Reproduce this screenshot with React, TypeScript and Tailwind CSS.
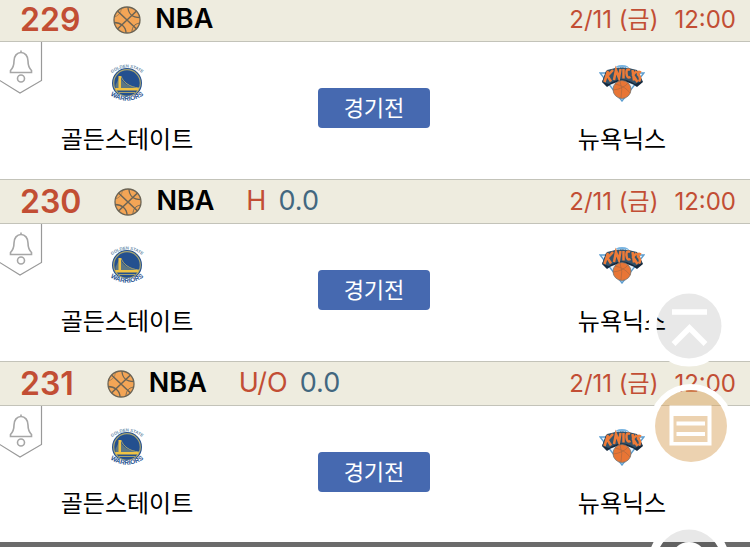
import clsx from 'clsx';

type Match = {
    no: number;
    label?: string;
    value?: string;
};

const matches: Match[] = [{ no: 229 }, { no: 230, label: 'H', value: '0.0' }, { no: 231, label: 'U/O', value: '0.0' }];

const Basketball = () => (
    <svg viewBox="0 0 28 28" className="h-7 w-7 shrink-0" fill="none" stroke="#6b6455" strokeWidth="1.3">
        <circle cx="14" cy="14" r="13" fill="#f3a556" />
        <path d="M4.500 5 23.500 23M23.500 5 4.500 23" strokeWidth="1.5" />
        <path d="M15 1C15 7 19 11.500 27 11.500" />
        <path d="M1 16.500C8 16.500 13 21 13 27" />
        <path d="M1.500 11C5 10 8 7 8.500 2.500" strokeWidth="0.5" />
        <path d="M19 26C19 21 21.500 18 26.500 17" strokeWidth="0.9" />
    </svg>
);

const WarriorsLogo = () => (
    <svg viewBox="0 0 32 38" className="h-[38px] w-8 overflow-visible" role="img" aria-label="Golden State Warriors">
        <path id="gsTop" d="M0 10Q16-3 32 10" fill="none" />
        <path id="gsBottom" d="M0 31.500Q16 42 32 31.500" fill="none" />
        <text fill="#6d8fae" fontSize="4.300" fontWeight="700" fontFamily="Liberation Sans, sans-serif" textAnchor="middle">
            <textPath href="#gsTop" startOffset="50%">
                GOLDEN STATE
            </textPath>
        </text>
        <circle cx="16" cy="19" r="15" fill="#24508f" />
        <circle cx="16" cy="19" r="13.300" stroke="#a9a672" strokeWidth="1.200" fill="none" />
        <path d="M9 12c2 7 8 11 18 12H4.500V21z" fill="#5d7783" />
        <path d="M7.500 12H10v12.500H7.500zM4 24h24l-1 2.500H5z" fill="#f0c344" />
        <path d="M10 12c2 6 8 11 18 12M8 28.500h16" fill="none" stroke="#c9b765" strokeWidth="0.8" />
        <path d="M0 26.500Q16 38 32 26.500V33Q16 44 0 33z" fill="#fff" />
        <text fill="#24508f" fontSize="6.500" fontWeight="700" fontFamily="Liberation Sans, sans-serif" textAnchor="middle">
            <textPath href="#gsBottom" startOffset="50%">
                WARRIORS
            </textPath>
        </text>
    </svg>
);

const KnicksLogo = () => (
    <svg viewBox="0 0 46 38" className="h-[38px] w-[46px]" role="img" aria-label="New York Knicks">
        <path d="M1 9h44L23 37z" fill="#e8f1f8" stroke="#5b9dd0" strokeWidth="1.4" />
        <path d="M15 6Q16 1 23 1T31 6L33 9H13z" fill="#78b4e1" />
        <path d="M17 4h12" stroke="#e8f1f8" strokeWidth="1.4" strokeDasharray="1.5 1" />
        <path d="M7 7Q23 1 39 7L44 18 38 23Q23 12 8 23L3 18z" fill="#15293e" />
        <path d="M8 6Q23 1 38 6L43 17 36 20Q23 11 10 20L3 18z" fill="#35536a" />
        <g fill="none" stroke="#ee7b38" strokeWidth="2.500">
            <path d="M9 7 5.500 18M14 6 8.500 12 12 17.500M15 16 17 6 20 14 21.500 5M24.500 5v9.500M31 6Q27 4 27.500 9.500 28 15 31.500 13M33.500 6 35 16.500M37.500 7 34 11 38.500 18M42 8.500Q38 6.500 39 10.500 42.500 14 40 17.500" />
        </g>
        <circle cx="23" cy="25.500" r="9" fill="#e87535" stroke="#77716b" strokeWidth="0.8" />
        <path d="M14 26Q24 25 29 19M21 17Q24 25 22 34M16 20Q26 22 31 29" fill="none" stroke="#a5663f" strokeWidth="0.6" />
    </svg>
);

const AlarmButton = () => (
    <button className="absolute top-0 left-0" aria-label="알림">
        <svg viewBox="0 0 43 53" className="h-[53px] w-[43px]" fill="none" stroke="#999" strokeWidth="1.2">
            <path d="M-1 38 20 51 41.500 38.500V-1" />
            <path
                d="M21 8.500v2M10.500 30.500v-2C13 26 14 23 14 19 14 14 17 10.500 21 10.500s7 3.500 7 8.500c0 4 1 7 3.500 9.500v2z"
                stroke="#a6a6a6"
                strokeWidth="1.6"
            />
            <circle cx="21" cy="36.500" r="3.500" stroke="#a6a6a6" strokeWidth="1.6" />
        </svg>
    </button>
);

const MatchRow = ({ no, label, value }: Match) => (
    <li>
        <div className="flex h-[45px] items-center border-y border-[#c3c3b9] bg-[#eeecdf] pr-[14px] pl-5">
            <span className="text-[32px] font-semibold text-[#c24e34]">{no}</span>
            <span className="ml-[33px]">
                <Basketball />
            </span>
            <span className="ml-[14px] text-[27px] font-semibold text-black">NBA</span>
            {label && (
                <span className="ml-8 flex gap-3 text-[27px]">
                    <span className="text-[#c24e34]">{label}</span>
                    <span className="text-[#42677f]">{value}</span>
                </span>
            )}
            <time className="ml-auto flex gap-4 text-2xl text-[#c24e34]">
                <span>2/11 (금)</span>
                <span>12:00</span>
            </time>
        </div>
        <div className="relative flex h-[137px] justify-between px-[60px] pt-[22px]">
            <AlarmButton />
            <div className="flex w-[134px] flex-col items-center">
                <WarriorsLogo />
                <span className="mt-[22px] text-2xl whitespace-nowrap text-black">골든스테이트</span>
            </div>
            <button className="mt-6 h-10 w-28 rounded bg-[#4669b0] text-[22px] leading-10 text-white">경기전</button>
            <div className="flex w-[136px] flex-col items-center">
                <KnicksLogo />
                <span className="mt-[22px] text-2xl whitespace-nowrap text-black">뉴욕닉스</span>
            </div>
        </div>
    </li>
);

const FloatButton = ({ label, className, children }: { label: string; className: string; children: React.ReactNode }) => (
    <button className={clsx('absolute h-[84px] w-[84px]', className)} aria-label={label}>
        <svg viewBox="0 0 84 84" className="h-full w-full" fill="none">
            {children}
        </svg>
    </button>
);

export default function App() {
    return (
        <main className="relative h-screen overflow-hidden bg-white font-[Inter,'Noto_Sans_CJK_KR',sans-serif]">
            <ul className="-mt-[3px]">
                {matches.map((match) => (
                    <MatchRow key={match.no} {...match} />
                ))}
            </ul>
            <footer className="absolute inset-x-0 bottom-0 h-[5px] bg-[#6b6b6b]" />

            <FloatButton label="맨 위로" className="top-[284px] right-[19px]">
                <circle cx="42" cy="42" r="36.500" stroke="#fff" strokeWidth="8" />
                <circle cx="42" cy="42" r="32.500" fill="#000" fillOpacity="0.09" />
                <path d="M25 28h35M26.500 60 42.500 44 58.500 60" stroke="#fff" strokeWidth="5.500" />
            </FloatButton>
            <FloatButton label="목록" className="top-[384px] right-[17px]">
                <circle cx="42" cy="42" r="39" stroke="#fff" strokeWidth="6" />
                <circle cx="42" cy="42" r="36" fill="#d9a561" fillOpacity="0.5" />
                <path d="M20.500 21.500h42v40h-42zM24.500 32v26h34V32z" fill="#fff" fillRule="evenodd" />
                <path d="M27.500 39.500H56M27.500 50H56" stroke="#fff" strokeWidth="4" />
            </FloatButton>
            <FloatButton label="새로고침" className="top-[520px] right-[19px]">
                <circle cx="42" cy="42" r="36.500" stroke="#fff" strokeWidth="8" />
                <circle cx="42" cy="42" r="32.500" fill="#000" fillOpacity="0.09" />
                <circle cx="42" cy="40" r="15" stroke="#fff" strokeWidth="6" />
            </FloatButton>
        </main>
    );
}
